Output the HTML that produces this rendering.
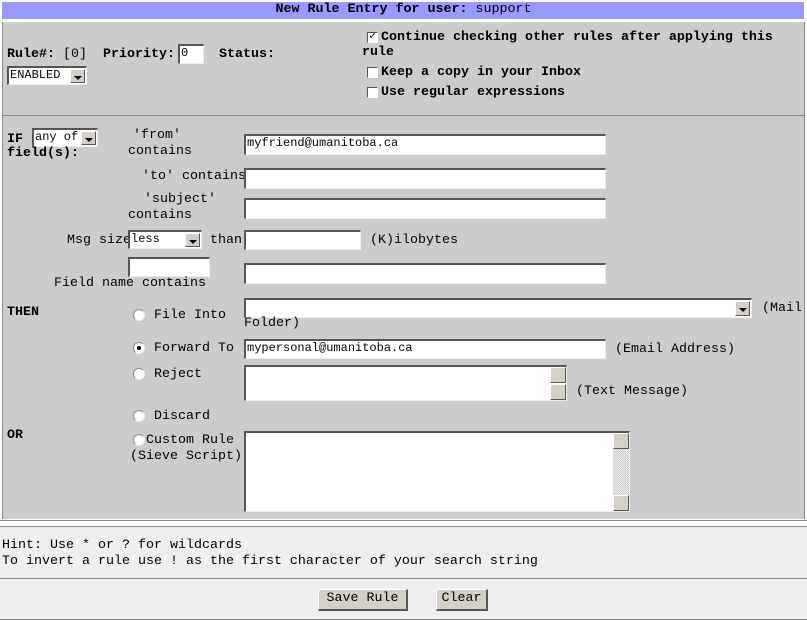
<!DOCTYPE html>
<html><head><meta charset="utf-8"><style>
body{margin:0;width:807px;height:619px;background:#fff;position:relative;overflow:hidden;font-family:"Liberation Mono","DejaVu Sans Mono",monospace;font-size:13.33px;color:#000}
.a{position:absolute}
.t{position:absolute;white-space:pre;line-height:16px}
.b{font-weight:bold}
.in{position:absolute;background:#fff;box-sizing:border-box;border-top:2px solid #555;border-left:2px solid #555;border-bottom:1px solid #eee;border-right:1px solid #eee;font-size:12px;line-height:14px;padding-left:1px;white-space:pre}
.cb{position:absolute;width:11px;height:11px;background:#fff;box-sizing:border-box;border-top:1px solid #555;border-left:1px solid #555;border-bottom:1px solid #fff;border-right:1px solid #fff;font-size:11px;line-height:9px;text-align:center}
.rd{position:absolute;width:12px;height:12px;border-radius:50%;background:#fff;box-sizing:border-box;border:1px solid #888;border-bottom-color:#eee;border-right-color:#eee}
.rd.on::after{content:"";position:absolute;left:3px;top:3px;width:4px;height:4px;border-radius:50%;background:#000}
.arr{position:absolute;right:1px;top:1px;bottom:1px;width:15px;background:#d4d0c8;box-sizing:border-box;border:1px solid #fff;border-right-color:#555;border-bottom-color:#555}
.arr::after{content:"";position:absolute;left:3px;top:6px;border-left:4px solid transparent;border-right:4px solid transparent;border-top:4px solid #000}
.btn{position:absolute;background:#d4d0c8;box-sizing:border-box;border:1px solid #fff;border-right:2px solid #555;border-bottom:2px solid #555;text-align:center;line-height:18px}
</style></head><body>
<div class="a" style="left:2px;top:2px;width:802px;height:17px;background:#9999ff"></div>
<div class="t" style="left:0;width:807px;top:2px;text-align:center"><span class="b">New Rule Entry for user:</span> support</div>
<div class="a" style="left:2px;top:22px;width:801px;height:497px;background:#ccc;border-left:1px solid #888;border-right:1px solid #888"></div>
<div class="a" style="left:3px;top:115px;width:801px;height:1px;background:#888"></div>
<div class="a" style="left:0;top:520px;width:807px;height:2px;background:#fff;border-top:1px solid #888"></div>
<div class="a" style="left:0;top:526px;width:807px;height:51px;background:#eee;border-top:1px solid #888"></div>
<div class="a" style="left:0;top:578px;width:807px;height:40px;background:#eee;border-top:1px solid #888;border-bottom:1px solid #888"></div>

<div class="t" style="left:7px;top:47px"><span class="b">Rule#:</span> [0]  <span class="b">Priority:</span></div>
<div class="in" style="left:178px;top:44px;width:26px;height:20px">0</div>
<div class="t b" style="left:219px;top:47px">Status:</div>
<div class="in" style="left:7px;top:66px;width:80px;height:19px">ENABLED<div class="arr"></div></div>
<div class="cb" style="left:367px;top:32px">✓</div>
<div class="t b" style="left:381px;top:30px">Continue checking other rules after applying this</div>
<div class="t b" style="left:362px;top:45px">rule</div>
<div class="cb" style="left:367px;top:67px"></div>
<div class="t b" style="left:381px;top:65px">Keep a copy in your Inbox</div>
<div class="cb" style="left:367px;top:87px"></div>
<div class="t b" style="left:381px;top:85px">Use regular expressions</div>

<div class="t b" style="left:7px;top:132px">IF</div>
<div class="in" style="left:32px;top:128px;width:66px;height:19px">any of<div class="arr"></div></div>
<div class="t b" style="left:7px;top:146px">field(s):</div>
<div class="t" style="left:128px;top:128px;width:58px;text-align:center">'from'
contains</div>
<div class="in" style="left:244px;top:134px;width:362px;height:21px">myfriend@umanitoba.ca</div>
<div class="t" style="left:142px;top:169px">'to' contains</div>
<div class="in" style="left:244px;top:168px;width:362px;height:21px"></div>
<div class="t" style="left:128px;top:192px">  'subject'
contains</div>
<div class="in" style="left:244px;top:198px;width:362px;height:21px"></div>
<div class="t" style="left:67px;top:233px">Msg size</div>
<div class="in" style="left:128px;top:230px;width:74px;height:19px">less<div class="arr"></div></div>
<div class="t" style="left:210px;top:233px">than</div>
<div class="in" style="left:244px;top:230px;width:117px;height:20px"></div>
<div class="t" style="left:370px;top:233px">(K)ilobytes</div>
<div class="in" style="left:128px;top:257px;width:82px;height:20px"></div>
<div class="t" style="left:54px;top:276px">Field name contains</div>
<div class="in" style="left:244px;top:263px;width:362px;height:21px"></div>

<div class="t b" style="left:7px;top:305px">THEN</div>
<div class="rd" style="left:133px;top:309px"></div>
<div class="t" style="left:154px;top:308px">File Into</div>
<div class="in" style="left:244px;top:298px;width:508px;height:20px"><div class="arr"></div></div>
<div class="t" style="left:762px;top:301px">(Mail</div>
<div class="t" style="left:244px;top:316px">Folder)</div>
<div class="rd on" style="left:133px;top:342px"></div>
<div class="t" style="left:154px;top:341px">Forward To</div>
<div class="in" style="left:244px;top:339px;width:362px;height:20px">mypersonal@umanitoba.ca</div>
<div class="t" style="left:615px;top:342px">(Email Address)</div>
<div class="rd" style="left:133px;top:368px"></div>
<div class="t" style="left:154px;top:367px">Reject</div>
<div class="in" style="left:244px;top:365px;width:323px;height:36px"><div class="a" style="right:0;top:0;width:16px;height:16px;background:#d4d0c8;border:1px solid #fff;border-right-color:#555;border-bottom-color:#555;box-sizing:border-box"></div><div class="a" style="right:0;bottom:0;width:16px;height:16px;background:#d4d0c8;border:1px solid #fff;border-right-color:#555;border-bottom-color:#555;box-sizing:border-box"></div></div>
<div class="t" style="left:576px;top:384px">(Text Message)</div>
<div class="rd" style="left:133px;top:410px"></div>
<div class="t" style="left:154px;top:409px">Discard</div>
<div class="t b" style="left:7px;top:428px">OR</div>
<div class="rd" style="left:133px;top:434px"></div>
<div class="t" style="left:130px;top:433px">  Custom Rule
(Sieve Script)</div>
<div class="in" style="left:244px;top:431px;width:386px;height:81px"><div class="a" style="right:0;top:0;width:16px;height:78px;background:repeating-conic-gradient(#eee 0 25%,#ccc 0 50%) 0 0/2px 2px"></div><div class="a" style="right:0;top:0;width:16px;height:16px;background:#d4d0c8;border:1px solid #fff;border-right-color:#555;border-bottom-color:#555;box-sizing:border-box"></div><div class="a" style="right:0;bottom:0;width:16px;height:16px;background:#d4d0c8;border:1px solid #fff;border-right-color:#555;border-bottom-color:#555;box-sizing:border-box"></div></div>

<div class="t" style="left:2px;top:538px">Hint: Use * or ? for wildcards
To invert a rule use ! as the first character of your search string</div>
<div class="btn" style="left:318px;top:589px;width:90px;height:22px">Save Rule</div>
<div class="btn" style="left:436px;top:589px;width:52px;height:22px">Clear</div>
</body></html>
